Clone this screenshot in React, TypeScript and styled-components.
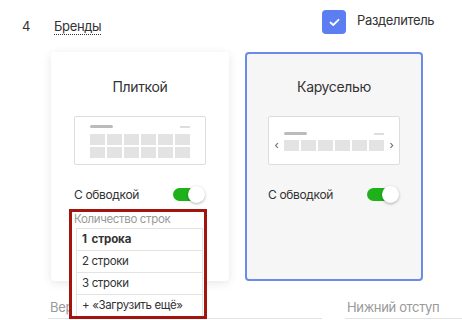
import React from 'react'
import styled, { createGlobalStyle } from 'styled-components'

const GlobalStyle = createGlobalStyle`
  html, body {
    margin: 0;
    padding: 0;
    background: #fff;
  }
  body {
    font-family: Inter, 'Noto Sans', sans-serif;
    color: #333;
    letter-spacing: -0.35px;
    overflow: hidden;
  }
`

const Page = styled.div`
  width: 462px;
  height: 320px;
  overflow: hidden;
`

const Header = styled.div`
  display: grid;
  grid-template-columns: 32px 268px auto;
  align-items: start;
  height: 52px;
  padding: 10px 0 0 22px;
  box-sizing: border-box;
`
const BlockNumber = styled.div`
  margin-top: 8px;
  font-size: 13px;
  line-height: 16px;
`
const BlockTitle = styled.span`
  justify-self: start;
  margin-top: 8px;
  font-size: 13px;
  line-height: 16px;
  border-bottom: 1px dotted #333;
`
const CheckRow = styled.label`
  display: flex;
  gap: 11px;
  font-size: 13px;
  line-height: 20px;
`
const CheckBox = styled.span`
  display: flex;
  align-items: center;
  justify-content: center;
  width: 24px;
  height: 24px;
  border-radius: 4px;
  background: #5c7ef2;
`

const Cards = styled.div`
  display: flex;
  gap: 16px;
  padding-left: 51px;
`
const Card = styled.div<{ $active?: boolean }>`
  position: relative;
  display: flex;
  flex-direction: column;
  align-items: center;
  width: 178px;
  height: 229px;
  box-sizing: border-box;
  padding-top: 23px;
  border: 2px solid ${p => (p.$active ? '#6a8bea' : 'transparent')};
  border-radius: 4px;
  background: ${p => (p.$active ? '#f6f6f6' : '#fff')};
  box-shadow: ${p => (p.$active ? 'none' : '0 2px 10px rgba(0, 0, 0, 0.1)')};
`
const CardTitle = styled.div`
  font-size: 14px;
  line-height: 20px;
`

const Preview = styled.div<{ $carousel?: boolean }>`
  width: 132px;
  height: 49px;
  box-sizing: border-box;
  margin-top: 19px;
  padding: ${p => (p.$carousel ? '15px' : '8px')} 15px 0;
  border: 1px solid #ddd;
  border-radius: 2px;
  background: #fff;
`
const PreviewHead = styled.div`
  display: flex;
  justify-content: space-between;
  align-items: center;
  height: 3px;
`
const HeadBar = styled.span`
  width: 23px;
  height: 3px;
  border-radius: 2px;
  background: #bbb;
`
const HeadDash = styled.span`
  width: 10px;
  height: 2px;
  background: #ddd;
`
const Tiles = styled.div<{ $rows: number }>`
  display: grid;
  grid-template-columns: repeat(6, 1fr);
  grid-template-rows: repeat(${p => p.$rows}, 11px);
  gap: 2px;
  flex: 1;
  margin-top: ${p => (p.$rows > 1 ? '6px' : '0')};
`
const Tile = styled.span`
  background: #e3e3e3;
`
const CarouselRow = styled.div`
  display: flex;
  align-items: center;
  margin: 5px -15px 0;
`
const Arrow = styled.span`
  width: 15px;
  text-align: center;
  font-size: 11px;
  line-height: 11px;
  color: #555;
`

const ToggleRow = styled.div`
  display: flex;
  align-items: center;
  justify-content: space-between;
  align-self: stretch;
  height: 20px;
  margin-top: 19px;
  padding: 0 23px 0 21px;
  font-size: 12px;
`
const Track = styled.span`
  position: relative;
  width: 28px;
  height: 13px;
  margin-right: 3px;
  border-radius: 7px;
  background: #1fb11a;
`
const Knob = styled.span`
  position: absolute;
  top: -2px;
  right: -4px;
  width: 17px;
  height: 17px;
  border-radius: 50%;
  background: #fff;
  box-shadow: 0 1px 3px rgba(0, 0, 0, 0.3);
`

const Dropdown = styled.div`
  position: absolute;
  top: 155px;
  left: 16px;
  z-index: 2;
  width: 138px;
  height: 110px;
  box-sizing: border-box;
  padding: 0 1px 0 2px;
  border: 3px solid #a3140f;
  background: #fff;
  overflow: hidden;
`
const DropdownLabel = styled.div`
  font-size: 11.5px;
  line-height: 15px;
  color: #999;
  margin-bottom: 1px;
`
const OptionList = styled.ul`
  margin: 0 0 0 2px;
  padding: 0;
  list-style: none;
  border: 1px solid #e3e3e3;
`
const Option = styled.li<{ $selected?: boolean }>`
  height: 21px;
  padding-left: 5px;
  font-size: 11.5px;
  line-height: 21px;
  font-weight: ${p => (p.$selected ? 700 : 400)};
  letter-spacing: ${p => (p.$selected ? '-0.1px' : '-0.35px')};
  word-spacing: ${p => (p.$selected ? '2px' : '0')};
  color: #333;
  & + & {
    border-top: 1px solid #e3e3e3;
  }
`

const Fields = styled.div`
  display: grid;
  grid-template-columns: 274px 1fr;
  gap: 23px;
  margin-top: 19px;
  padding-left: 48px;
`
const Field = styled.div`
  padding: 0 0 4px 2px;
  border-bottom: 1px solid #e2e2e2;
  font-size: 13px;
  line-height: 14px;
  color: #999;
`

const Check = () => (
  <svg width="11" height="9" viewBox="0 0 11 9">
    <polyline points="1.5,4.5 4.2,7 9.5,1.8" fill="none" stroke="#fff" strokeWidth="1.8" strokeLinecap="round" strokeLinejoin="round" />
  </svg>
)

const Toggle = () => (
  <Track>
    <Knob />
  </Track>
)

const cells = (n: number) => Array.from({ length: n }, (_, i) => <Tile key={i} />)

const options = ['1 строка', '2 строки', '3 строки', '+ «Загрузить ещё»']

const App = () => (
  <Page>
    <GlobalStyle />
    <Header>
      <BlockNumber>4</BlockNumber>
      <BlockTitle>Бренды</BlockTitle>
      <CheckRow>
        <CheckBox>
          <Check />
        </CheckBox>
        Разделитель
      </CheckRow>
    </Header>

    <Cards>
      <Card>
        <CardTitle>Плиткой</CardTitle>
        <Preview>
          <PreviewHead>
            <HeadBar />
            <HeadDash />
          </PreviewHead>
          <Tiles $rows={2}>{cells(12)}</Tiles>
        </Preview>
        <ToggleRow>
          С обводкой
          <Toggle />
        </ToggleRow>
        <Dropdown>
          <DropdownLabel>Количество строк</DropdownLabel>
          <OptionList>
            {options.map((o, i) => (
              <Option key={o} $selected={i === 0}>{o}</Option>
            ))}
          </OptionList>
        </Dropdown>
      </Card>

      <Card $active>
        <CardTitle>Каруселью</CardTitle>
        <Preview $carousel>
          <PreviewHead>
            <HeadBar />
            <HeadDash />
          </PreviewHead>
          <CarouselRow>
            <Arrow>‹</Arrow>
            <Tiles $rows={1}>{cells(6)}</Tiles>
            <Arrow>›</Arrow>
          </CarouselRow>
        </Preview>
        <ToggleRow>
          С обводкой
          <Toggle />
        </ToggleRow>
      </Card>
    </Cards>

    <Fields>
      <Field>Верхний отступ</Field>
      <Field>Нижний отступ</Field>
    </Fields>
  </Page>
)

export default App
